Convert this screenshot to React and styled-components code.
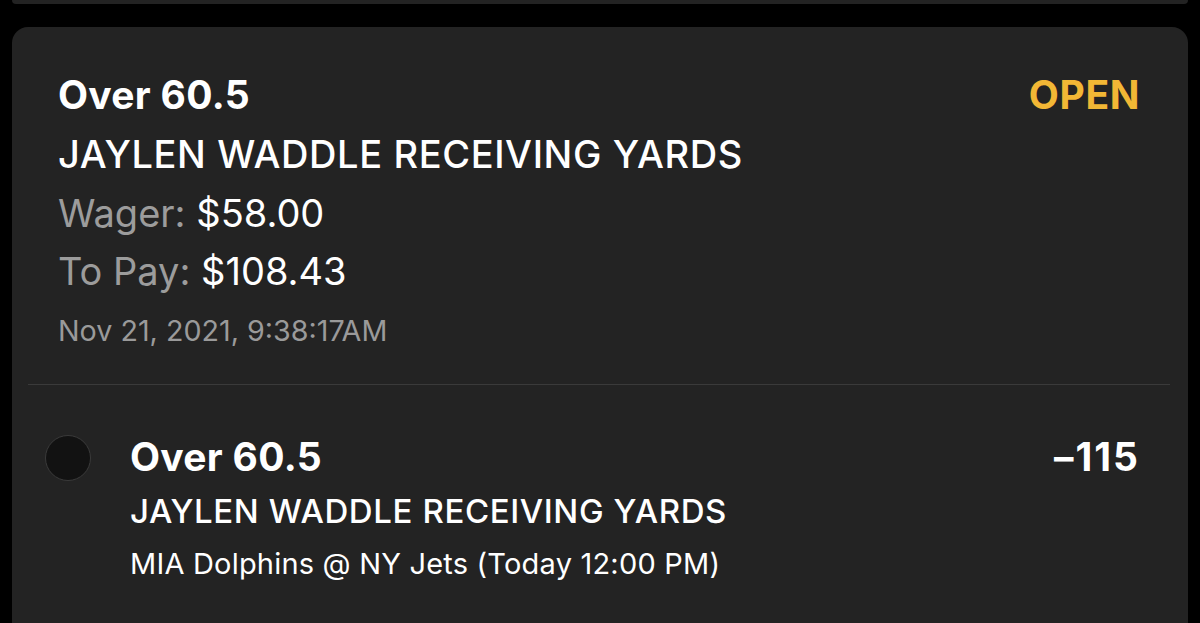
import styled, { createGlobalStyle } from "styled-components";

const GlobalStyle = createGlobalStyle`
  html, body {
    margin: 0;
    padding: 0;
    background: #000;
    overflow: hidden;
  }
  body {
    font-family: Inter, "Liberation Sans", sans-serif;
    -webkit-font-smoothing: antialiased;
  }
`;

const Page = styled.div`
  height: 623px;
  padding: 0 12px;
  display: flex;
  flex-direction: column;
  row-gap: 23px;
`;

const PrevCard = styled.div`
  height: 4px;
  background: #232323;
  border-radius: 0 0 16px 16px;
`;

const Card = styled.div`
  flex: 1;
  background: #232323;
  border-radius: 16px 16px 0 0;
  padding-top: 37px;
`;

const Summary = styled.div`
  padding: 0 48px 22px 46px;
`;

const TopRow = styled.div`
  display: flex;
  justify-content: space-between;
  align-items: center;
  height: ${(p) => p.$h || 60}px;
`;

const Title = styled.h2`
  margin: 0;
  color: #fff;
  font-weight: 700;
  font-size: 39px;
  letter-spacing: 0.3px;
`;

const Status = styled.span`
  color: #f2b735;
  font-weight: 700;
  font-size: 39px;
  letter-spacing: 0.6px;
`;

const Market = styled.div`
  color: #fff;
  font-weight: 500;
  font-size: ${(p) => (p.$small ? "33px" : "38px")};
  line-height: ${(p) => (p.$small ? "54px" : "60px")};
  letter-spacing: 0.6px;
`;

const Detail = styled.div`
  font-size: 38px;
  line-height: 58px;
  color: #9c9c9c;
  span {
    color: #fff;
  }
`;

const Placed = styled.div`
  font-size: 28.7px;
  line-height: 62px;
  color: #9a9a9a;
`;

const Divider = styled.hr`
  margin: 0 18px 0 16px;
  border: none;
  border-top: 1px solid #3a3a3a;
`;

const Leg = styled.div`
  display: flex;
  align-items: flex-start;
  column-gap: 39px;
  padding: 43px 48px 0 33px;
`;

const Dot = styled.div`
  flex-shrink: 0;
  margin-top: 7px;
  width: 44px;
  height: 44px;
  border-radius: 50%;
  background: #121212;
  border: 1px solid #3a3a3a;
`;

const LegBody = styled.div`
  flex: 1;
`;

const Odds = styled.span`
  color: #fff;
  font-weight: 700;
  font-size: 39px;
  letter-spacing: 2px;
`;

const Game = styled.div`
  color: #fff;
  font-size: 29px;
  line-height: 52px;
  letter-spacing: 0.2px;
`;

function App() {
  return (
    <>
      <GlobalStyle />
      <Page>
        <PrevCard />
        <Card>
          <Summary>
            <TopRow>
              <Title>Over 60.5</Title>
              <Status>OPEN</Status>
            </TopRow>
            <Market>JAYLEN WADDLE RECEIVING YARDS</Market>
            <Detail>
              Wager: <span>$58.00</span>
            </Detail>
            <Detail>
              To Pay: <span>$108.43</span>
            </Detail>
            <Placed>Nov 21, 2021, 9:38:17AM</Placed>
          </Summary>
          <Divider />
          <Leg>
            <Dot />
            <LegBody>
              <TopRow $h={56}>
                <Title>Over 60.5</Title>
                <Odds>–115</Odds>
              </TopRow>
              <Market $small>JAYLEN WADDLE RECEIVING YARDS</Market>
              <Game>MIA Dolphins @ NY Jets (Today 12:00 PM)</Game>
            </LegBody>
          </Leg>
        </Card>
      </Page>
    </>
  );
}

export default App;
